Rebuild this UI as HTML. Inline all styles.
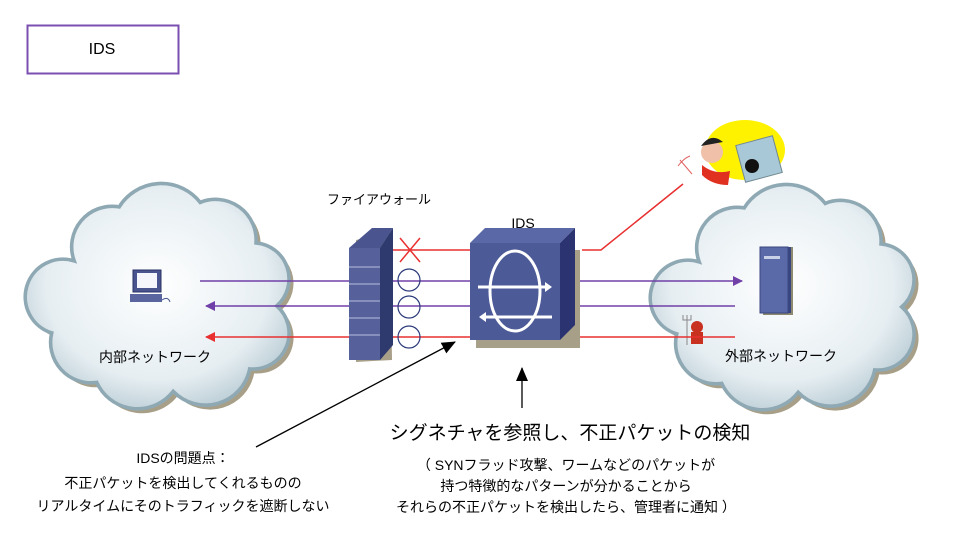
<!DOCTYPE html>
<html><head><meta charset="utf-8"><style>
body{margin:0;background:#fff;}
svg{display:block;font-family:"Liberation Sans","Noto Sans CJK JP",sans-serif;}
</style></head><body>
<svg width="956" height="544" viewBox="0 0 956 544" xmlns="http://www.w3.org/2000/svg">
<defs>
<radialGradient id="cg" cx="50%" cy="45%" r="60%">
<stop offset="0" stop-color="#ffffff"/><stop offset="0.7" stop-color="#e6eef2"/><stop offset="1" stop-color="#b7cad3"/>
</radialGradient>
<marker id="ap" markerWidth="10" markerHeight="10" refX="9" refY="5" orient="auto" markerUnits="userSpaceOnUse"><path d="M0,0 L10,5 L0,10 Z" fill="#7040a8"/></marker>
<marker id="ar" markerWidth="10" markerHeight="10" refX="9" refY="5" orient="auto" markerUnits="userSpaceOnUse"><path d="M0,0 L10,5 L0,10 Z" fill="#e83030"/></marker>
<marker id="ak" markerWidth="14" markerHeight="12" refX="13" refY="6" orient="auto" markerUnits="userSpaceOnUse"><path d="M0,0 L14,6 L0,12 Z" fill="#000"/></marker>
<path id="cloud" d="M60,260 A45,45 0 0 1 110,200 A55,55 0 0 1 200,195 A45,45 0 0 1 262,240 A40,40 0 0 1 285,310 A40,40 0 0 1 255,380 A50,50 0 0 1 170,405 A50,50 0 0 1 85,395 A45,45 0 0 1 35,340 A40,40 0 0 1 60,260 Z"/>
<g id="cl">
<use href="#cloud" transform="translate(5,5)" fill="#a89f88"/>
<use href="#cloud" fill="url(#cg)" stroke="#8fa9b4" stroke-width="4"/>
</g>
</defs>
<rect x="27.5" y="25.5" width="151" height="48" fill="#fff" stroke="#7a4fb0" stroke-width="2"/>
<text x="102" y="54" font-size="16" text-anchor="middle">IDS</text>

<!-- clouds -->
<use href="#cl" transform="translate(157,296) scale(0.9) translate(-152,-299)"/>
<use href="#cl" transform="translate(782,297) scale(0.9) translate(-152,-299)"/>

<!-- computer -->
<rect x="133" y="270" width="28" height="22" fill="#4a5590" stroke="#2b3366"/>
<rect x="137" y="273" width="20" height="15" fill="#f4f6fb"/>
<rect x="130" y="294" width="32" height="8" fill="#5a65a0"/>
<path d="M162,300 q6,-4 8,2" stroke="#4a5590" fill="none"/>
<text x="155" y="362" font-size="14" text-anchor="middle">内部ネットワーク</text>

<!-- server -->
<rect x="763" y="247" width="30" height="68" fill="#8e8a70"/>
<rect x="760" y="247" width="28" height="66" fill="#5a6aa8" stroke="#3a4680"/>
<rect x="788" y="247" width="3" height="66" fill="#3a4680"/>
<rect x="764" y="256" width="16" height="3" fill="#c8d0e8"/>
<text x="781" y="361" font-size="14" text-anchor="middle">外部ネットワーク</text>

<!-- small devil -->
<circle cx="697" cy="327" r="6" fill="#c83020"/>
<rect x="691" y="332" width="12" height="12" fill="#c83020"/>
<path d="M687,315 v30 M683,315 v5 h8 v-5" stroke="#888" fill="none"/>

<!-- big devil -->
<ellipse cx="745" cy="150" rx="40" ry="30" fill="#fff200"/>
<rect x="740" y="140" width="38" height="38" fill="#a8c8d8" stroke="#708890" transform="rotate(-15 759 159)"/>
<circle cx="752" cy="166" r="7" fill="#111"/>
<circle cx="712" cy="152" r="11" fill="#f0c0a8"/>
<path d="M701,146 q10,-14 22,-4" fill="#222"/>
<path d="M702,165 q12,10 28,6 l-2,14 q-16,0 -26,-10z" fill="#e03020"/>
<path d="M680,160 l12,14 M678,166 q6,-8 12,-10" stroke="#e06060" fill="none"/>

<!-- lines -->
<line x1="200" y1="281" x2="742" y2="281" stroke="#7040a8" stroke-width="1.5" marker-end="url(#ap)"/>
<line x1="735" y1="306" x2="206" y2="306" stroke="#7040a8" stroke-width="1.5" marker-end="url(#ap)"/>
<line x1="735" y1="337" x2="206" y2="337" stroke="#e83030" stroke-width="1.5" marker-end="url(#ar)"/>
<line x1="470" y1="250" x2="368" y2="250" stroke="#e83030" stroke-width="1.5" marker-end="url(#ar)"/>
<polyline points="582,250 601,250 683,184" stroke="#e83030" stroke-width="1.5" fill="none"/>
<path d="M400,238 l20,24 M420,238 l-20,24" stroke="#e83030" stroke-width="1.5"/>
<g fill="none" stroke="#2b3a7a" stroke-width="1.2">
<circle cx="409" cy="280" r="11"/><circle cx="409" cy="307" r="11"/><circle cx="409" cy="337" r="11"/>
</g>

<!-- firewall -->
<path d="M356,240 L390,232 L392,360 L356,362 Z" fill="#a89f88"/>
<path d="M349,248 L372,228 L393,228 L380,248 Z" fill="#4a5590"/>
<path d="M380,248 L393,228 L393,345 L380,360 Z" fill="#2e3a6e"/>
<rect x="349" y="248" width="31" height="112" fill="#56609a"/>
<g stroke="#b8c0e0" stroke-width="1">
<line x1="349" y1="267" x2="380" y2="267"/><line x1="349" y1="284" x2="380" y2="284"/>
<line x1="349" y1="301" x2="380" y2="301"/><line x1="349" y1="318" x2="380" y2="318"/><line x1="349" y1="335" x2="380" y2="335"/>
</g>
<text x="379" y="204" font-size="13" text-anchor="middle">ファイアウォール</text>

<!-- IDS box -->
<rect x="476" y="250" width="104" height="98" fill="#a89f88"/>
<path d="M470,243 L485,228 L575,228 L560,243 Z" fill="#5a68a8"/>
<path d="M560,243 L575,228 L575,325 L560,340 Z" fill="#2b3470"/>
<rect x="470" y="243" width="90" height="97" fill="#4c5a98"/>
<ellipse cx="515" cy="291" rx="25" ry="40" fill="none" stroke="#fff" stroke-width="3"/>
<line x1="478" y1="287" x2="548" y2="287" stroke="#fff" stroke-width="3"/>
<path d="M545,282 L552,287 L545,292Z" fill="#fff"/>
<line x1="483" y1="317" x2="552" y2="317" stroke="#fff" stroke-width="3"/>
<path d="M486,312 L479,317 L486,322Z" fill="#fff"/>
<text x="523" y="228" font-size="14" text-anchor="middle">IDS</text>

<!-- black arrows -->
<line x1="256" y1="447" x2="455" y2="342" stroke="#000" stroke-width="1.3" marker-end="url(#ak)"/>
<line x1="522" y1="408" x2="522" y2="368" stroke="#000" stroke-width="1.3" marker-end="url(#ak)"/>

<!-- texts -->
<text x="570" y="439" font-size="19" text-anchor="middle">シグネチャを参照し、不正パケットの検知</text>
<text x="566" y="470" font-size="14" text-anchor="middle">（ SYNフラッド攻撃、ワームなどのパケットが</text>
<text x="566" y="491" font-size="14" text-anchor="middle">持つ特徴的なパターンが分かることから</text>
<text x="566" y="512" font-size="14" text-anchor="middle">それらの不正パケットを検出したら、管理者に通知 ）</text>
<text x="183" y="463" font-size="14" text-anchor="middle">IDSの問題点：</text>
<text x="183" y="488" font-size="14" text-anchor="middle">不正パケットを検出してくれるものの</text>
<text x="183" y="511" font-size="14" text-anchor="middle">リアルタイムにそのトラフィックを遮断しない</text>
</svg>
</body></html>
